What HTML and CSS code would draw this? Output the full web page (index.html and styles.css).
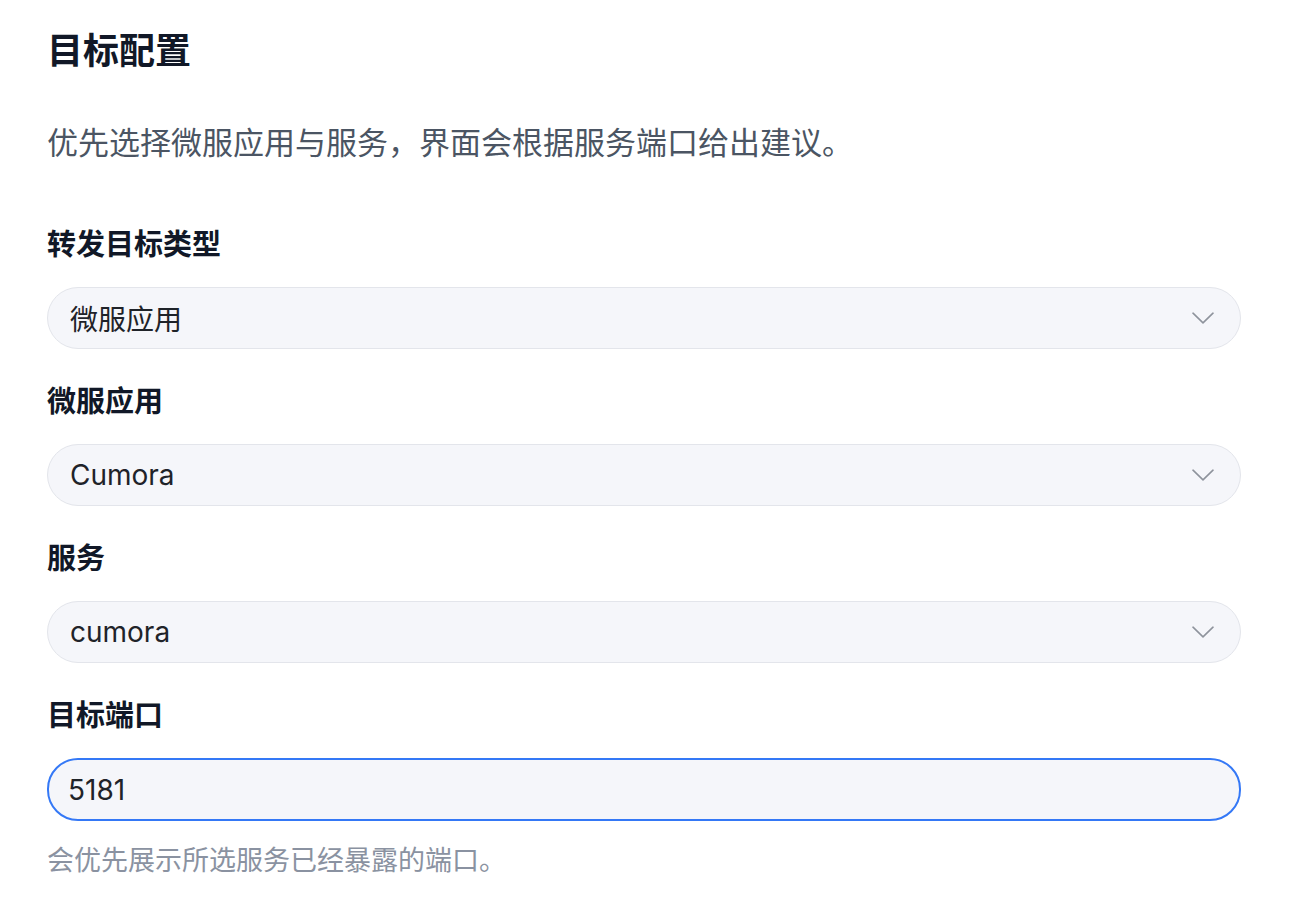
FILE: index.html
```html
<!DOCTYPE html>
<html lang="zh-CN">
<head>
<meta charset="utf-8">
<title>目标配置</title>
<link rel="stylesheet" href="styles.css">
</head>
<body>
<main class="panel">
  <h1 class="title">目标配置</h1>
  <p class="desc">优先选择微服应用与服务，界面会根据服务端口给出建议。</p>

  <div class="field">
    <div class="label">转发目标类型</div>
    <div class="select">
      <span class="value">微服应用</span>
      <svg class="chev" width="22" height="12" viewBox="0 0 22 12"><path d="M1 1.2 L11 10.8 L21 1.2" fill="none" stroke="#8e939c" stroke-width="1.6" stroke-linecap="round" stroke-linejoin="round"/></svg>
    </div>
  </div>

  <div class="field">
    <div class="label">微服应用</div>
    <div class="select">
      <span class="value">Cumora</span>
      <svg class="chev" width="22" height="12" viewBox="0 0 22 12"><path d="M1 1.2 L11 10.8 L21 1.2" fill="none" stroke="#8e939c" stroke-width="1.6" stroke-linecap="round" stroke-linejoin="round"/></svg>
    </div>
  </div>

  <div class="field">
    <div class="label">服务</div>
    <div class="select">
      <span class="value">cumora</span>
      <svg class="chev" width="22" height="12" viewBox="0 0 22 12"><path d="M1 1.2 L11 10.8 L21 1.2" fill="none" stroke="#8e939c" stroke-width="1.6" stroke-linecap="round" stroke-linejoin="round"/></svg>
    </div>
  </div>

  <div class="field last">
    <div class="label">目标端口</div>
    <div class="input focused">
      <span class="value">5181</span>
    </div>
    <p class="hint">会优先展示所选服务已经暴露的端口。</p>
  </div>
</main>
</body>
</html>
```

FILE: styles.css
```css
* { box-sizing: border-box; }
html, body { margin: 0; padding: 0; background: #ffffff; }
body {
  font-family: Inter, "Noto Sans CJK SC", "Noto Sans", sans-serif;
  color: #111827;
}
.panel {
  width: 1194px;
  margin-left: 47px;
  padding-top: 27px;
}
.title {
  margin: 0;
  font-size: 36px;
  line-height: 48px;
  font-weight: 700;
  color: #111827;
}
.desc {
  margin: 48px 0 0;
  font-size: 31px;
  line-height: 40px;
  color: #4b5563;
}
.field { margin-top: 62px; }
.field + .field { margin-top: 33px; }
.label {
  font-size: 29px;
  line-height: 40px;
  font-weight: 700;
  color: #111827;
}
.select, .input {
  margin-top: 22px;
  height: 62px;
  border-radius: 31px;
  background: #f5f6fa;
  border: 1px solid #e3e5eb;
  display: flex;
  align-items: center;
  justify-content: space-between;
  padding: 0 26px 0 22px;
}
.value {
  font-size: 28px;
  color: #1f2329;
}
.chev { display: block; }
.input.focused {
  border: 2px solid #3478f6;
  height: 63px;
  padding-left: 19px;
}
.hint {
  margin: 22px 0 0;
  font-size: 27px;
  line-height: 36px;
  color: #8a92a1;
}
```
